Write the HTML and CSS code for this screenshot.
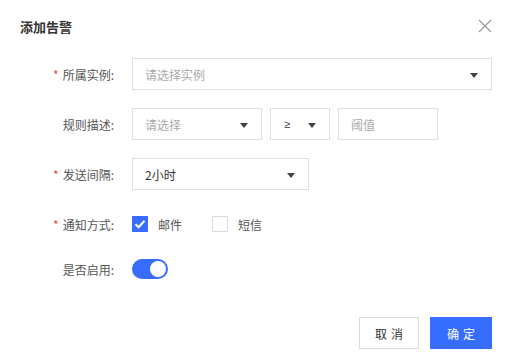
FILE: index.html
```html
<!DOCTYPE html>
<html lang="zh-CN">
<head>
  <meta charset="UTF-8">
  <title>添加告警</title>
  <link rel="stylesheet" href="styles.css">
</head>
<body>
  <div class="dialog">
    <div class="dialog-header">
      <h1>添加告警</h1>
      <span class="close">
        <svg width="14" height="14" viewBox="0 0 14 14"><path d="M1 1L13 13M13 1L1 13" stroke="#999" stroke-width="1.2" fill="none"/></svg>
      </span>
    </div>

    <form class="form">
      <div class="form-row">
        <label class="label"><i>*</i>所属实例:</label>
        <div class="select select-wide placeholder">请选择实例<b class="arrow"></b></div>
      </div>
      <div class="form-row">
        <label class="label">规则描述:</label>
        <div class="select select-rule placeholder">请选择<b class="arrow"></b></div>
        <div class="select select-op"><span class="op">≥</span><b class="arrow"></b></div>
        <div class="input placeholder">阈值</div>
      </div>
      <div class="form-row">
        <label class="label"><i>*</i>发送间隔:</label>
        <div class="select select-mid">2小时<b class="arrow"></b></div>
      </div>
      <div class="form-row">
        <label class="label"><i>*</i>通知方式:</label>
        <span class="check checked">
          <svg width="16" height="16" viewBox="0 0 16 16"><path d="M3.5 8.2L6.6 11.2L12.5 4.8" stroke="#fff" stroke-width="2" fill="none"/></svg>
        </span>
        <span class="check-text">邮件</span>
        <span class="check"></span>
        <span class="check-text">短信</span>
      </div>
      <div class="form-row row-switch">
        <label class="label">是否启用:</label>
        <span class="switch"><span class="knob"></span></span>
      </div>
    </form>

    <div class="dialog-footer">
      <button type="button" class="btn">取消</button>
      <button type="button" class="btn btn-primary">确定</button>
    </div>
  </div>
</body>
</html>
```

FILE: styles.css
```css
body {
  margin: 0;
  background: #fff;
  font-family: "Noto Sans CJK SC", "Noto Sans", sans-serif;
  color: #333;
}
.dialog {
  width: 510px;
  height: 360px;
  padding: 12px 18px 0 20px;
  box-sizing: border-box;
}
.dialog-header {
  display: flex;
  align-items: center;
  justify-content: space-between;
  height: 28px;
}
.dialog-header h1 {
  margin: 0;
  font-size: 13px;
  font-weight: 600;
  color: #333;
}
.close {
  display: flex;
  width: 14px;
  height: 14px;
}
.form {
  margin-top: 18px;
}
.form-row {
  display: flex;
  align-items: center;
  height: 32px;
  margin-bottom: 18px;
  font-size: 12px;
}
.row-switch {
  height: 22px;
  margin-bottom: 0;
}
.label {
  width: 112px;
  padding-right: 18px;
  box-sizing: border-box;
  text-align: right;
  color: #555;
}
.label i {
  font-style: normal;
  color: #f04848;
  margin-right: 4px;
}
.select,
.input {
  position: relative;
  height: 32px;
  box-sizing: border-box;
  border: 1px solid #e0e0e0;
  padding: 0 12px;
  display: flex;
  align-items: center;
  color: #333;
}
.placeholder {
  color: #aaa;
}
.select-wide { width: 360px; }
.select-rule { width: 130px; margin-right: 8px; }
.select-op { width: 60px; margin-right: 8px; }
.select-mid { width: 177px; }
.input { width: 100px; }
.op {
  font-family: "Liberation Sans", sans-serif;
  font-size: 11px;
  margin-left: 1px;
}
.arrow {
  position: absolute;
  right: 13px;
  top: 14px;
  border-left: 4px solid transparent;
  border-right: 4px solid transparent;
  border-top: 5px solid #444;
}
.check {
  width: 16px;
  height: 16px;
  box-sizing: border-box;
  border: 1px solid #dcdcdc;
  display: flex;
}
.check.checked {
  background: #366dff;
  border-color: #366dff;
}
.check.checked svg {
  margin: -1px;
}
.check-text {
  margin-left: 10px;
  margin-right: 30px;
  color: #555;
}
.switch {
  width: 36px;
  height: 20px;
  border-radius: 10px;
  background: #366dff;
  display: flex;
  align-items: center;
  justify-content: flex-end;
  padding: 0 2px;
  box-sizing: border-box;
}
.knob {
  width: 16px;
  height: 16px;
  border-radius: 50%;
  background: #fff;
}
.dialog-footer {
  display: flex;
  justify-content: flex-end;
  gap: 11px;
  margin-top: 37px;
}
.btn {
  width: 60px;
  height: 32px;
  border: 1px solid #dcdcdc;
  background: #fff;
  color: #333;
  font-family: inherit;
  font-size: 12px;
  letter-spacing: 4px;
  text-indent: 4px;
  cursor: pointer;
}
.btn-primary {
  width: 62px;
  background: #366dff;
  border-color: #366dff;
  color: #fff;
}
```
